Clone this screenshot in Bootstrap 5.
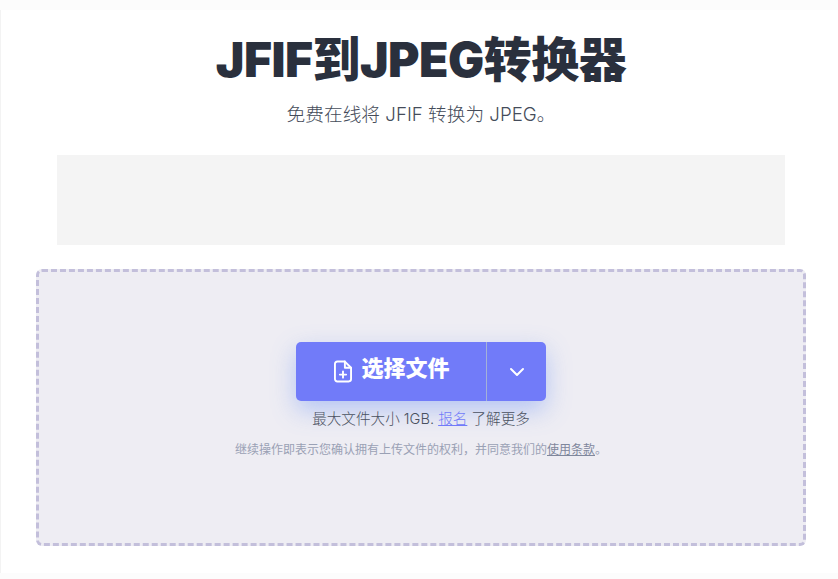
<!DOCTYPE html>
<html lang="zh-CN">
<head>
<meta charset="utf-8">
<title>JFIF到JPEG转换器</title>
<link href="https://cdn.jsdelivr.net/npm/bootstrap@5.3.0/dist/css/bootstrap.min.css" rel="stylesheet">
<style>
html,body{height:100%;overflow:hidden}
body{background:#fcfcfc;font-family:Inter,"Noto Sans CJK SC",sans-serif;color:#2b323f;padding:10px 0 6px 0}
.sheet{height:100%;margin-left:1px;background:#fff;box-shadow:-1px 0 0 #f3f3f3;padding:16px 32px 0 35px}
.headline{font-size:48px;font-weight:900;line-height:68px;margin:0;color:#2a303d;text-align:center;letter-spacing:-.5px}
.subline{font-size:18.7px;line-height:26px;margin:8px 0 0;color:#454c5a;font-weight:300;text-align:center}
.adbox{width:728px;height:90px;margin:27px auto 24px;background:#f4f4f4}
.dropzone{height:277px;background:#eeedf3;border:3px dashed #c3bfdb;border-radius:6px;padding-top:70px}
.splitbtn{width:250px;height:59px;border-radius:5px;background:#717bf9;box-shadow:0 9px 24px rgba(100,140,245,.42);color:#fff}
.mainpart{width:191px;padding-left:2px;border-right:1px solid #a3b1d8;font-size:22px;font-weight:900;gap:9px}
.mainpart span{position:relative;top:-3px}
.arrowpart{width:59px}
.sizeline{font-size:14.6px;line-height:20px;margin:8px 0 0;color:#4a5160;font-weight:300}
.sizeline a{color:#717bf9}
.termline{font-size:12px;line-height:16px;margin:13px 0 0;color:#9aa1b5}
.termline a{color:#7f879c}
</style>
</head>
<body>
<div class="sheet">
  <h1 class="headline">JFIF到JPEG转换器</h1>
  <p class="subline">免费在线将 JFIF 转换为 JPEG。</p>
  <div class="adbox"></div>
  <div class="dropzone text-center">
    <div class="splitbtn d-flex mx-auto">
      <div class="mainpart d-flex align-items-center justify-content-center">
        <svg width="18" height="23" viewBox="0 0 19 23" fill="none" stroke="#fff" stroke-width="2" stroke-linejoin="round" stroke-linecap="round"><path d="M11.5 1H3.5A2.5 2.5 0 0 0 1 3.500V19.500A2.500 2.500 0 0 0 3.500 22H15.500A2.500 2.500 0 0 0 18 19.500V7.500Z"/><path d="M11.500 1V7.500H18"/><path d="M9.500 11.500V18M6.200 14.750H12.800"/></svg>
        <span>选择文件</span>
      </div>
      <div class="arrowpart d-flex align-items-center justify-content-center">
        <svg width="16" height="10" viewBox="0 0 16 10" fill="none" stroke="#fff" stroke-width="2" stroke-linecap="round" stroke-linejoin="round"><path d="M2 2L8 8L14 2"/></svg>
      </div>
    </div>
    <p class="sizeline">最大文件大小 1GB. <a href="#">报名</a> 了解更多</p>
    <p class="termline">继续操作即表示您确认拥有上传文件的权利，并同意我们的<a href="#">使用条款</a>。</p>
  </div>
</div>
<script src="https://cdn.jsdelivr.net/npm/bootstrap@5.3.0/dist/js/bootstrap.bundle.min.js"></script>
</body>
</html>
